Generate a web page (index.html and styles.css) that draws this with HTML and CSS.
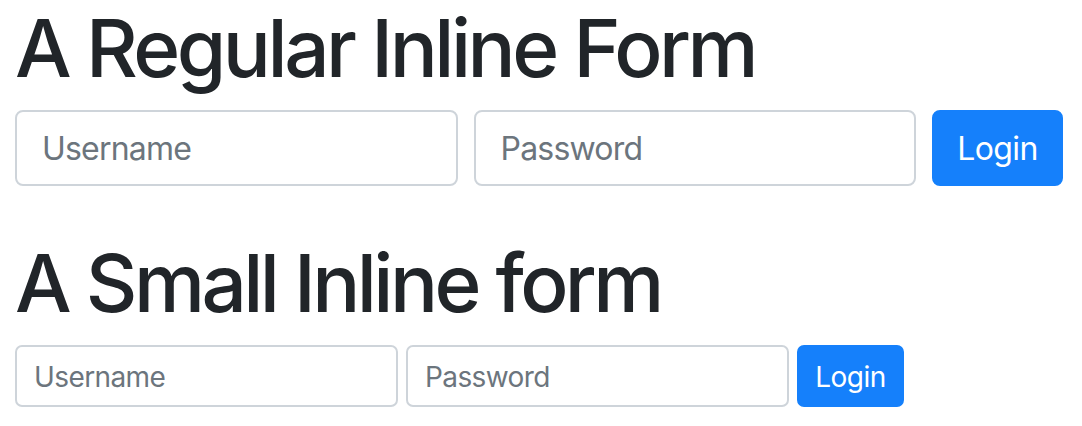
FILE: index.html
```html
<!DOCTYPE html>
<html lang="en">
<head>
<meta charset="utf-8">
<title>Inline Forms</title>
<link rel="stylesheet" href="styles.css">
</head>
<body>
<main class="page">
  <h1 class="title">A Regular Inline Form</h1>
  <form class="inline-form">
    <input class="field" type="text" placeholder="Username">
    <input class="field" type="password" placeholder="Password">
    <button class="btn" type="button">Login</button>
  </form>

  <h1 class="title title-second">A Small Inline form</h1>
  <form class="inline-form inline-form-sm">
    <input class="field field-sm" type="text" placeholder="Username">
    <input class="field field-sm" type="password" placeholder="Password">
    <button class="btn btn-sm" type="button">Login</button>
  </form>
</main>
</body>
</html>
```

FILE: styles.css
```css
* {
  box-sizing: border-box;
}

html, body {
  margin: 0;
  padding: 0;
  background: #ffffff;
}

body {
  font-family: Inter, "Noto Sans", "Liberation Sans", sans-serif;
  color: #212529;
}

.page {
  padding: 0 19px 0 15px;
}

.title {
  margin: 0 0 14px;
  font-size: 80px;
  font-weight: 500;
  line-height: 96px;
  letter-spacing: -3.5px;
  color: #212529;
}

.title-second {
  margin-top: 49px;
  letter-spacing: -3.6px;
}

.inline-form {
  display: flex;
  gap: 16px;
  align-items: stretch;
}

.field {
  flex: 1 1 0;
  min-width: 0;
  height: 76px;
  padding: 0 25px;
  border: 2px solid #ced4da;
  border-radius: 8px;
  font-family: inherit;
  font-size: 32px;
  letter-spacing: -0.8px;
  color: #495057;
  background: #fff;
  outline: none;
}

.field::placeholder {
  color: #6c757d;
  opacity: 1;
}

.btn {
  flex: 0 0 auto;
  width: 131px;
  height: 76px;
  padding: 0;
  border: 2px solid #1580fb;
  border-radius: 8px;
  background: #1580fb;
  color: #fff;
  font-family: inherit;
  font-size: 32px;
  letter-spacing: -0.6px;
  font-weight: 400;
}

.inline-form-sm {
  gap: 8px;
}

.field-sm {
  flex: 0 0 383px;
  height: 62px;
  padding: 2px 17px 0;
  font-size: 28px;
  letter-spacing: -0.6px;
  border-radius: 7px;
}

.btn-sm {
  width: 107px;
  height: 62px;
  padding: 2px 0 0;
  font-size: 28px;
  letter-spacing: -0.5px;
  border-radius: 7px;
}
```
